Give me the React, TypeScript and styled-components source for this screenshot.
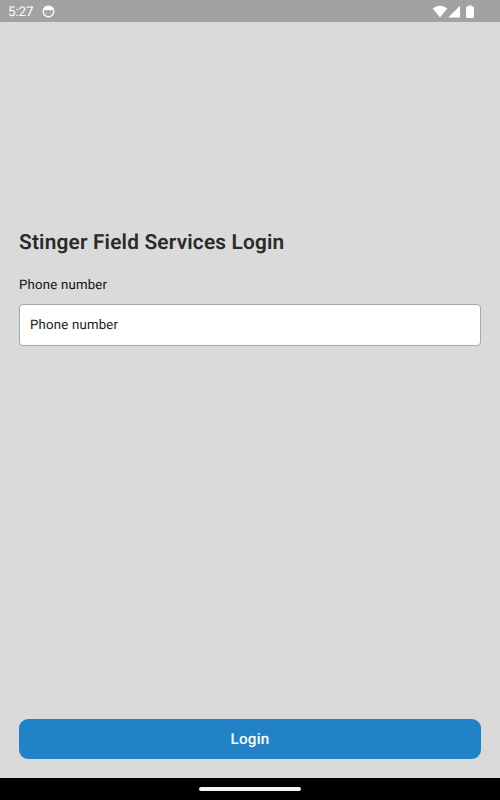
import React from "react";
import styled, { createGlobalStyle } from "styled-components";

const GlobalStyle = createGlobalStyle`
  *, *::before, *::after { box-sizing: border-box; }
  body { margin: 0; font-family: Roboto, sans-serif; color: #111; text-rendering: geometricPrecision; }
`;

const Screen = styled.div`
  display: flex;
  flex-direction: column;
  height: 800px;
  background: #dadada;
`;

const StatusBar = styled.header`
  display: flex;
  align-items: center;
  flex: none;
  height: 22px;
  padding: 1px 24px 0 8px;
  background: #a2a2a2;
  color: #fff;
`;

const Clock = styled.time`
  font-size: 13.4px;
  line-height: 20px;
  width: 34px;
  padding-top: 2px;
  letter-spacing: -0.1px;
`;

const StatusIcons = styled.div`
  display: flex;
  align-items: center;
  margin-left: auto;
`;

const Form = styled.form`
  display: flex;
  flex-direction: column;
  flex: 1;
  padding: 206px 19px 19px;
`;

const Title = styled.h1`
  margin: 0;
  font-size: 20.8px;
  line-height: 30px;
  font-weight: 600;
  letter-spacing: 0.2px;
  color: #2a2a2a;
`;

const Label = styled.label`
  margin-top: 18px;
  font-size: 13.2px;
  line-height: 20px;
  font-weight: 450;
  letter-spacing: 0.22px;
`;

const Input = styled.input`
  height: 42px;
  margin-top: 7.5px;
  padding: 1px 10px 0;
  border: 1px solid #a8a8a8;
  border-radius: 4px;
  background: #fff;
  font: 400 13.2px Roboto, sans-serif;
  letter-spacing: 0.22px;
  text-rendering: inherit;
  outline: none;
  &::placeholder { color: #181818; opacity: 1; }
`;

const LoginButton = styled.button`
  height: 40px;
  margin-top: auto;
  border: 0;
  border-radius: 9px;
  background: #2182c7;
  color: #fff;
  font: 500 15.2px Roboto, sans-serif;
  letter-spacing: 0.2px;
  text-rendering: inherit;
`;

const NavigationBar = styled.footer`
  display: flex;
  align-items: center;
  justify-content: center;
  flex: none;
  height: 22px;
  background: #000;
`;

const HomeHandle = styled.div`
  width: 102px;
  height: 4px;
  border-radius: 2px;
  background: #f4f4f4;
`;

const NotificationIcon = () => (
  <svg width="13" height="13" viewBox="0 0 13 13" fill="none">
    <circle cx="6.5" cy="6.5" r="5.3" stroke="#fff" strokeWidth="1.3" />
    <path d="M1.5 5.8V3.6L3 1.6h7l1.5 2v2.2L10 4.8l-1.4.7-2.1-.6-2.1.6-1.4-.7z" fill="#fff" />
    <path d="M4.2 7.8h1M7.8 7.8h1" stroke="#d4d4d4" strokeWidth=".8" />
  </svg>
);

const SignalIcons = () => (
  <svg width="44" height="16" viewBox="432 3.5 44 16" fill="#fff">
    <path d="M432.7 8.1Q440 2.4 447.3 8.1L440 17z" />
    <path d="M460 5.2V17h-11.8z" />
    <path d="M468.3 5h3.4v1.1h1.2q1 0 1 1V16.5q0 1-1 1h-5.8q-1 0-1-1V7.1q0-1 1-1h1.2z" />
  </svg>
);

export default function App() {
  return (
    <>
      <GlobalStyle />
      <Screen>
        <StatusBar>
          <Clock>5:27</Clock>
          <NotificationIcon />
          <StatusIcons>
            <SignalIcons />
          </StatusIcons>
        </StatusBar>
        <Form onSubmit={(event) => event.preventDefault()}>
          <Title>Stinger Field Services Login</Title>
          <Label htmlFor="phone">Phone number</Label>
          <Input id="phone" type="tel" placeholder="Phone number" />
          <LoginButton type="submit">Login</LoginButton>
        </Form>
        <NavigationBar>
          <HomeHandle />
        </NavigationBar>
      </Screen>
    </>
  );
}
